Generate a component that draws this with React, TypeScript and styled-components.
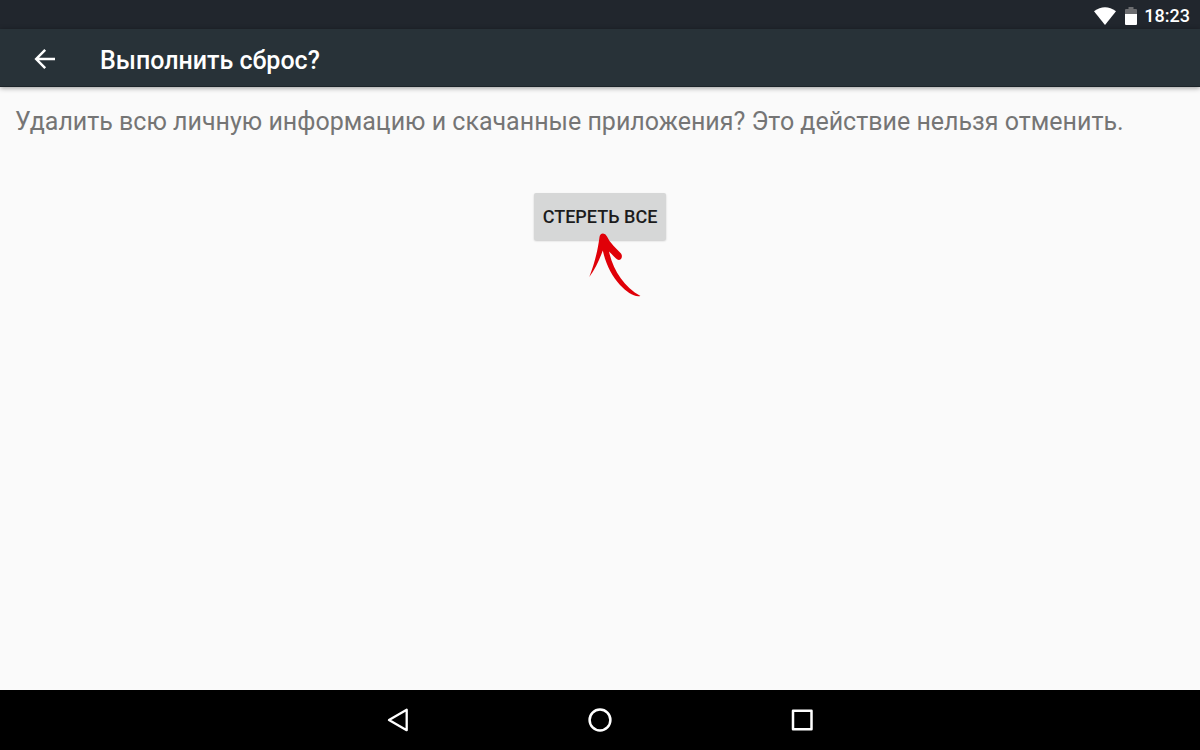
import React from "react";
import styled, { createGlobalStyle } from "styled-components";

const GlobalStyle = createGlobalStyle`
  * { box-sizing: border-box; }
  body {
    margin: 0;
    background: #fafafa;
    font-family: Roboto, "Noto Sans", sans-serif;
  }
`;

const Screen = styled.div`
  display: flex;
  flex-direction: column;
  min-height: 100vh;
`;

const StatusBar = styled.div`
  display: flex;
  align-items: center;
  justify-content: flex-end;
  height: 29px;
  padding: 2px 10px 0 0;
  background: #21262d;
  color: #fff;
`;

const Clock = styled.time`
  margin-left: 7px;
  font-size: 18px;
  line-height: 24px;
  font-weight: 500;
`;

const BatteryIcon = styled.svg`
  margin-left: 9px;
`;

const AppBar = styled.header`
  display: flex;
  align-items: center;
  height: 58px;
  padding: 3px 32px 0;
  background: #283238;
  border-bottom: 1px solid #1c2429;
  box-shadow: 0 1px 5px rgba(0, 0, 0, 0.4);
  color: #fff;
`;

const IconButton = styled.button`
  display: flex;
  align-items: center;
  justify-content: center;
  padding: 0;
  border: 0;
  background: none;
  color: #fff;
  cursor: pointer;
`;

const Title = styled.h1`
  margin: 4px 0 0 42px;
  font-size: 25px;
  line-height: 32px;
  font-weight: 500;
`;

const Content = styled.main`
  flex: 1;
  display: flex;
  flex-direction: column;
  align-items: center;
  padding: 18px 15px;
`;

const Message = styled.p`
  align-self: stretch;
  margin: 0 0 54px;
  color: #757575;
  font-size: 25px;
  line-height: 34px;
`;

const ActionArea = styled.div`
  position: relative;
`;

const EraseButton = styled.button`
  display: block;
  padding: 12px 9px 11px;
  border: 0;
  border-radius: 2px;
  background: #d6d7d7;
  box-shadow: 0 1px 2px rgba(0, 0, 0, 0.2);
  color: #1c1c1c;
  font-family: inherit;
  font-size: 18px;
  line-height: 24px;
  font-weight: 500;
  text-transform: uppercase;
  white-space: nowrap;
  cursor: pointer;
`;

const Pointer = styled.svg`
  position: absolute;
  top: 39px;
  left: 50%;
  margin-left: -14px;
  pointer-events: none;
`;

const NavBar = styled.nav`
  display: flex;
  align-items: center;
  justify-content: center;
  gap: 162px;
  height: 60px;
  background: #000;
`;

const NavButton = styled(IconButton)`
  width: 40px;
  height: 40px;
`;

export default function App() {
  return (
    <Screen>
      <GlobalStyle />
      <StatusBar>
        <svg width="22" height="18" viewBox="0 0 22 18" aria-hidden="true">
          <path d="M0 4.3Q11 -3.7 22 4.3L11 18Z" fill="#fff" />
        </svg>
        <BatteryIcon width="12" height="18" viewBox="0 0 12 18" aria-hidden="true">
          <path d="M1 2H3.5V0H8.5V2H11Q12 2 12 3V7H0V3Q0 2 1 2Z" fill="#6c6d70" />
          <path d="M0 7H12V17Q12 18 11 18H1Q0 18 0 17Z" fill="#fff" />
        </BatteryIcon>
        <Clock>18:23</Clock>
      </StatusBar>

      <AppBar>
        <IconButton aria-label="Назад">
          <svg width="26" height="26" viewBox="0 0 26 26" fill="none" stroke="currentColor" strokeWidth="2.5">
            <path d="M23 13H5M13.2 3.8L4.2 13L13.2 22.2" />
          </svg>
        </IconButton>
        <Title>Выполнить сброс?</Title>
      </AppBar>

      <Content>
        <Message>
          Удалить всю личную информацию и скачанные приложения? Это действие нельзя отменить.
        </Message>
        <ActionArea>
          <EraseButton>Стереть все</EraseButton>
          <Pointer width="60" height="68" viewBox="0 0 60 68" aria-hidden="true">
            <path
              d="M3.3 45C8 33 12 18 13.5 5Q14 1.5 17 1.5Q19.5 1.5 21 4.5C24 11 30 16 35 21.5Q36.8 24 35 27Q32.5 29 30 26.5C27.5 24 25.5 22 23 19.5C27 38 38 55 54.5 64C48 65.500 41 60 34 53C26 44 20 33 16.8 18.5C13 29 9 37 3.3 45Z"
              fill="#e00008"
            />
          </Pointer>
        </ActionArea>
      </Content>

      <NavBar>
        <NavButton aria-label="Назад">
          <svg width="26" height="26" viewBox="0 0 26 26" fill="none" stroke="#fff" strokeWidth="2.3" strokeLinejoin="round">
            <path d="M21.7 2.8V23.2L4 13Z" />
          </svg>
        </NavButton>
        <NavButton aria-label="Главный экран">
          <svg width="26" height="26" viewBox="0 0 26 26" fill="none" stroke="#fff" strokeWidth="2.5">
            <circle cx="13" cy="13" r="10.4" />
          </svg>
        </NavButton>
        <NavButton aria-label="Обзор">
          <svg width="26" height="26" viewBox="0 0 26 26" fill="none" stroke="#fff" strokeWidth="2.5" strokeLinejoin="round">
            <rect x="4" y="3.8" width="18.5" height="18.5" />
          </svg>
        </NavButton>
      </NavBar>
    </Screen>
  );
}
